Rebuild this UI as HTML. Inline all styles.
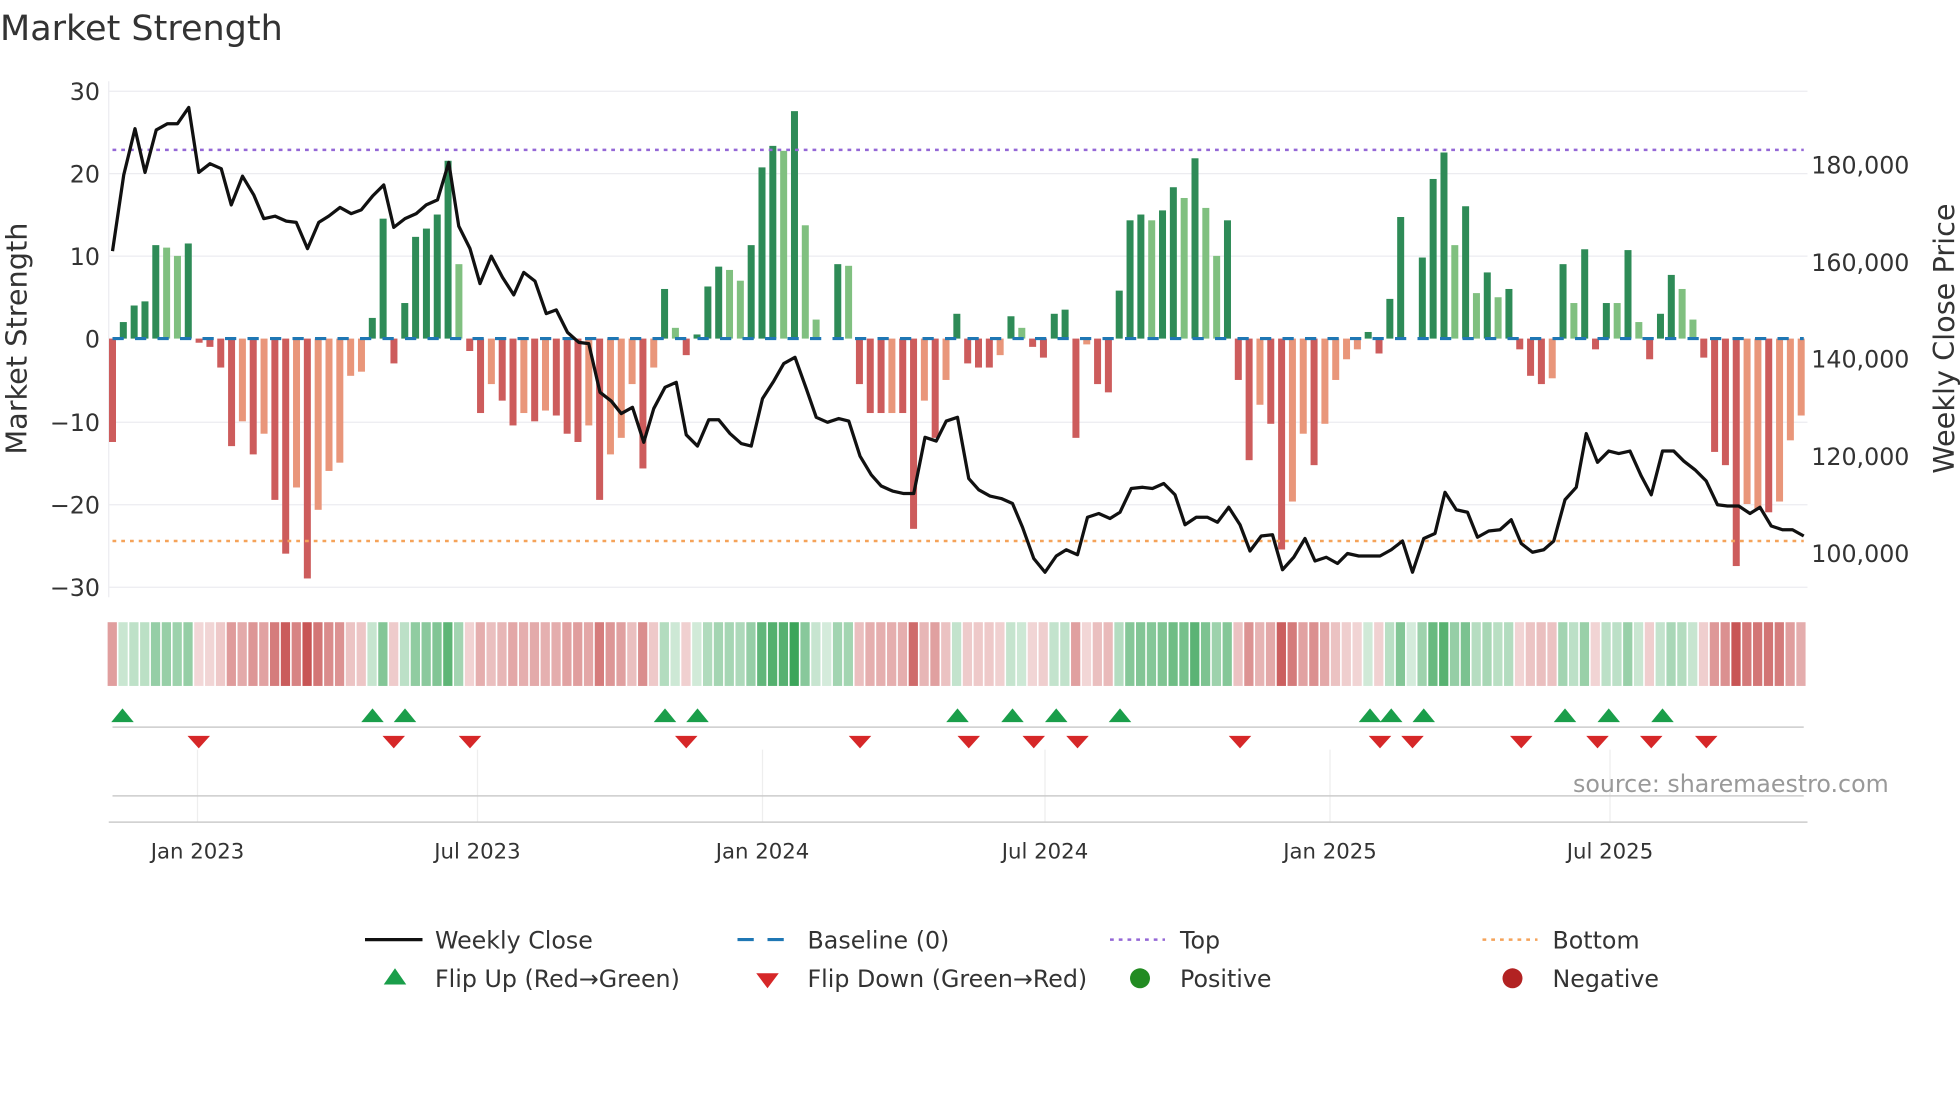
<!DOCTYPE html>
<html><head><meta charset="utf-8"><style>
html,body{margin:0;padding:0;background:#fff;}
svg{display:block;font-family:"DejaVu Sans","Liberation Sans",sans-serif;}
</style></head><body>
<svg id="s" width="1960" height="1102" viewBox="0 0 1568 882" preserveAspectRatio="none" xmlns="http://www.w3.org/2000/svg">
<rect width="1568" height="882" fill="#fff"/>
<text x="0" y="32" font-size="28" fill="#333">Market Strength</text>
<g stroke="#ececf0" stroke-width="1">
<line x1="87" x2="1446" y1="73" y2="73"/><line x1="87" x2="1446" y1="139" y2="139"/><line x1="87" x2="1446" y1="205" y2="205"/><line x1="87" x2="1446" y1="338" y2="338"/><line x1="87" x2="1446" y1="404" y2="404"/><line x1="87" x2="1446" y1="470" y2="470"/>
<line x1="87" x2="87" y1="65" y2="478"/>
</g>
<g font-size="19" fill="#333" text-anchor="end">
<text x="80" y="80">30</text><text x="80" y="146">20</text><text x="80" y="212">10</text><text x="80" y="278">0</text><text x="80" y="345">−10</text><text x="80" y="411">−20</text><text x="80" y="477">−30</text>
</g>
<g font-size="19" fill="#333">
<text x="1449" y="139">180,000</text><text x="1449" y="217">160,000</text><text x="1449" y="294">140,000</text><text x="1449" y="372">120,000</text><text x="1449" y="450">100,000</text>
</g>
<text transform="translate(21,271) rotate(-90)" font-size="23" fill="#333" text-anchor="middle">Market Strength</text>
<text transform="translate(1563,271) rotate(-90)" font-size="23" fill="#333" text-anchor="middle">Weekly Close Price</text>
<g id="bars"></g>
<line x1="90" x2="1443" y1="271" y2="271" stroke="#1f77b4" stroke-width="2.5" stroke-dasharray="9 9"/>
<line x1="90" x2="1443" y1="120" y2="120" stroke="#9467d6" stroke-width="2" stroke-dasharray="3 4"/>
<line x1="90" x2="1443" y1="433" y2="433" stroke="#f5a35a" stroke-width="2" stroke-dasharray="3 4"/>
<polyline id="price" fill="none" stroke="#111" stroke-width="2.6" stroke-linejoin="round"/>
<g id="heat"></g>
<g stroke="#eee" stroke-width="1">
<line x1="158" x2="158" y1="600" y2="658"/><line x1="382" x2="382" y1="600" y2="658"/><line x1="610" x2="610" y1="600" y2="658"/><line x1="836" x2="836" y1="600" y2="658"/><line x1="1064" x2="1064" y1="600" y2="658"/><line x1="1288" x2="1288" y1="600" y2="658"/>
</g>
<line x1="90" x2="1443" y1="582" y2="582" stroke="#ccc" stroke-width="1.2"/>
<line x1="90" x2="1443" y1="637" y2="637" stroke="#ccc" stroke-width="1.2"/>
<line x1="87" x2="1446" y1="658" y2="658" stroke="#ccc" stroke-width="1.2"/>
<g id="marks"></g>
<text x="1511" y="634" font-size="19" fill="#999" text-anchor="end">source: sharemaestro.com</text>
<g font-size="17" fill="#333" text-anchor="middle">
<text x="158" y="687">Jan 2023</text><text x="382" y="687">Jul 2023</text><text x="610" y="687">Jan 2024</text><text x="836" y="687">Jul 2024</text><text x="1064" y="687">Jan 2025</text><text x="1288" y="687">Jul 2025</text>
</g>
<g font-size="19" fill="#333">
<line x1="292" x2="338" y1="752" y2="752" stroke="#111" stroke-width="2.6"/><text x="348" y="759">Weekly Close</text>
<line x1="590" x2="634" y1="752" y2="752" stroke="#1f77b4" stroke-width="2.5" stroke-dasharray="13 11"/><text x="646" y="759">Baseline (0)</text>
<line x1="888" x2="932" y1="752" y2="752" stroke="#9467d6" stroke-width="2" stroke-dasharray="3 4"/><text x="944" y="759">Top</text>
<line x1="1186" x2="1230" y1="752" y2="752" stroke="#f5a35a" stroke-width="2" stroke-dasharray="3 4"/><text x="1242" y="759">Bottom</text>
<polygon points="307,788 325,788 316,775" fill="#1a9e4a"/><text x="348" y="790">Flip Up (Red→Green)</text>
<polygon points="605,779 623,779 614,791" fill="#d62728"/><text x="646" y="790">Flip Down (Green→Red)</text>
<circle cx="912" cy="783" r="8" fill="#228b22"/><text x="944" y="790">Positive</text>
<circle cx="1210" cy="783" r="8" fill="#b22222"/><text x="1242" y="790">Negative</text>
</g>
</svg>
<script>
var NS="http://www.w3.org/2000/svg";
var d="-12.5R 2G 4G 4.5G 11.3G 11g 10g 11.5G -0.5R -1R -3.5R -13R -10o -14R -11.5o -19.5R -26R -18o -29R -20.7o -16o -15o -4.5o -4o 2.5G 14.5G -3R 4.3G 12.3G 13.3G 15G 21.5G 9g -1.5R -9R -5.5o -7.5R -10.5R -9o -10R -8.7o -9.3R -11.5R -12.5R -10.5o -19.5R -14o -12o -5.5o -15.7R -3.5o 6G 1.3g -2R 0.5G 6.3G 8.7G 8.3g 7g 11.3G 20.7G 23.3G 22.7g 27.5G 13.7g 2.3g 0G 9G 8.8g -5.5R -9R -9R -9o -9R -23R -7.5o -12R -5o 3G -3R -3.5R -3.5R -2o 2.7G 1.3g -1R -2.3R 3G 3.5G -12R -0.7o -5.5R -6.5R 5.8G 14.3G 15G 14.3g 15.5G 18.3G 17g 21.8G 15.8g 10g 14.3G -5R -14.7R -8o -10.3R -25.5R -19.7o -11.5o -15.3R -10.3o -5o -2.5o -1.3o 0.8G -1.8R 4.8G 14.7G 0G 9.8G 19.3G 22.5G 11.3g 16G 5.5g 8G 5g 6G -1.3R -4.5R -5.5R -4.8o 9G 4.3g 10.8G -1.3R 4.3G 4.3g 10.7G 2g -2.5R 3G 7.7G 6g 2.3g -2.3R -13.7R -15.3R -27.5R -20o -20.7o -21R -19.7o -12.3o -9.3o".split(" ");
var col={G:"#2e8b57",g:"#80c080",R:"#cd5c5c",o:"#e9967a"};
var bars=document.getElementById("bars"),heat=document.getElementById("heat");
function el(n,a,p){var e=document.createElementNS(NS,n);for(var k in a)e.setAttribute(k,a[k]);p.appendChild(e);return e;}
d.forEach(function(s,i){var v=parseFloat(s),c=s.slice(-1),x=90+8.66*i;
 if(v!==0){var h=Math.abs(v)*6.62;el("rect",{x:x-2.8,y:v>0?271-h:271,width:5.6,height:h,fill:col[c]},bars);}
 var a=Math.min(1,0.22+Math.abs(v)/30*0.85);
 var fc=v>=0?"rgba(60,165,90,"+a+")":"rgba(200,85,85,"+a+")";
 el("rect",{x:x-3.9,y:498,width:7.4,height:51,fill:fc},heat);});
var p="90,201 99,140 108,103 116,138 125,104 134,99 142,99 151,86 159,138 168,131 177,135 185,164 194,141 203,156 211,175 220,173 229,177 237,178 246,199 255,178 263,173 272,166 281,171 289,168 298,157 307,148 315,182 324,175 333,171 341,164 350,160 359,130 367,181 376,199 384,227 393,205 402,222 411,236 419,218 428,225 437,251 445,248 454,266 463,274 471,275 480,314 489,321 497,331 506,326 515,354 523,327 532,310 541,306 549,348 558,357 567,336 575,336 584,347 593,355 601,357 610,319 619,305 627,291 636,286 645,311 653,334 662,338 671,335 679,337 688,365 697,380 705,389 714,393 723,395 731,395 740,350 749,353 757,337 766,334 775,383 783,392 792,397 801,399 810,403 818,422 827,447 836,458 845,445 853,440 862,444 870,414 879,411 888,415 896,410 905,391 914,390 922,391 931,387 940,396 948,420 957,414 966,414 974,418 983,406 992,420 1000,441 1009,429 1018,428 1026,456 1035,446 1044,431 1052,449 1061,446 1070,451 1078,443 1087,445 1096,445 1104,445 1113,440 1122,433 1130,458 1139,431 1148,427 1156,394 1165,408 1174,410 1182,430 1191,425 1200,424 1209,416 1217,435 1226,442 1235,440 1243,433 1252,400 1261,390 1269,347 1278,370 1287,361 1295,363 1304,361 1313,381 1321,396 1330,361 1339,361 1347,369 1356,376 1365,385 1374,404 1382,405 1391,405 1400,411 1408,406 1417,421 1426,424 1434,424 1443,429";
document.getElementById("price").setAttribute("points",p);
var m=document.getElementById("marks");
[98,298,324,532,558,766,810,845,896,1096,1113,1139,1252,1287,1330].forEach(function(x){el("polygon",{points:(x-9)+",578 "+(x+9)+",578 "+x+",567",fill:"#1a9e4a"},m);});
[159,315,376,549,688,775,827,862,992,1104,1130,1217,1278,1321,1365].forEach(function(x){el("polygon",{points:(x-9)+",589 "+(x+9)+",589 "+x+",599",fill:"#d62728"},m);});
</script>
</body></html>
